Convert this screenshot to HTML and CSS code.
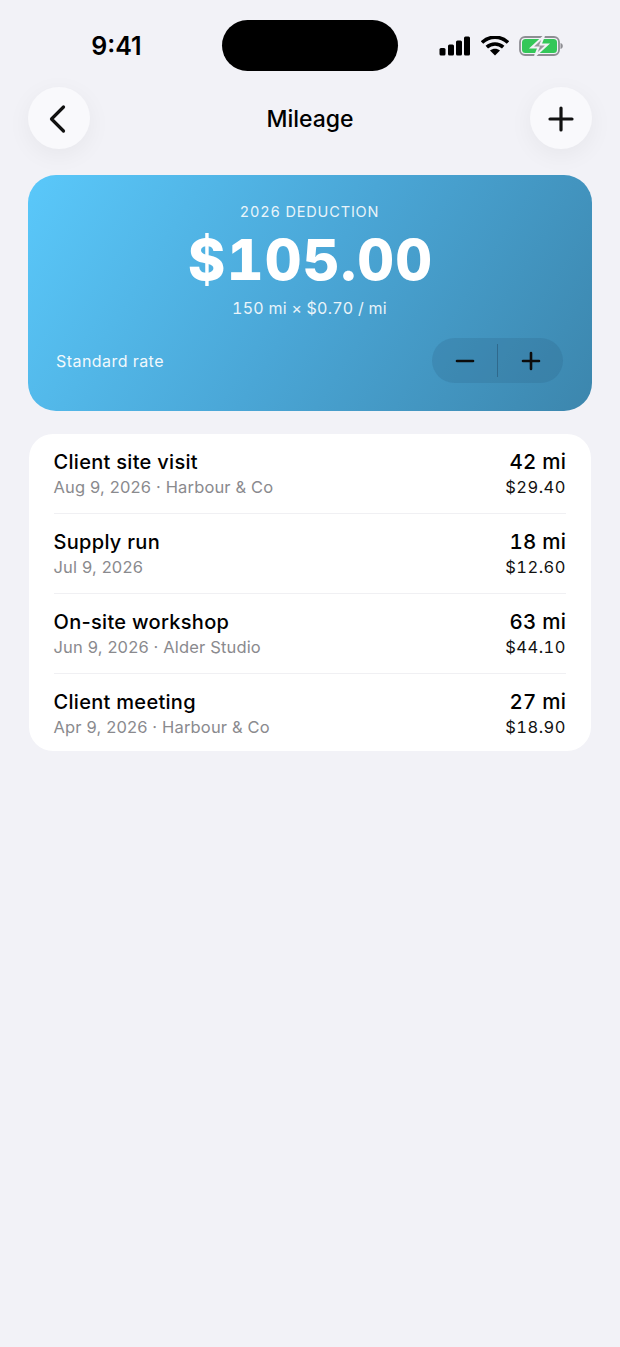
FILE: index.html
```html
<!DOCTYPE html>
<html>
<head>
    <title>Mileage</title>
    <link rel="stylesheet" href="styles.css">
</head>
<body>
    <div class="status-bar">
        <div class="time">9:41</div>
        <div class="island"></div>
        <div class="status-icons">
            <svg width="32" height="20" viewBox="0 0 32 20">
                <rect x="0.5" y="12" width="6" height="7.5" rx="1.5"/>
                <rect x="9" y="8.5" width="6" height="11" rx="1.5"/>
                <rect x="17" y="4.5" width="6" height="15" rx="1.5"/>
                <rect x="25" y="0.5" width="6" height="19" rx="1.5"/>
            </svg>
            <svg width="28" height="20" viewBox="0 0 28 20">
                <path d="M1 6.500C8.500 -0.500 19.500 -0.500 27 6.500" class="wifi-arc"/>
                <path d="M5.800 11.200C10.500 6.900 17.500 6.900 22.200 11.200" class="wifi-arc"/>
                <path d="M14 19.500L9 14.500C12 12 16 12 19 14.500Z"/>
            </svg>
            <svg width="44" height="20" viewBox="0 0 44 20">
                <rect x="1" y="1" width="39" height="18" rx="5" class="batt-shell"/>
                <rect x="3" y="3" width="35" height="14" rx="3.500" class="batt-fill"/>
                <path d="M41.500 7C43 7.300 43.800 8.500 43.800 10C43.800 11.500 43 12.700 41.500 13Z" class="batt-tip"/>
                <path d="M25 0L12.500 11.500H19.500L16 20L28.500 8.500H21.500Z" class="batt-bolt"/>
            </svg>
        </div>
    </div>

    <div class="nav">
        <div class="round-btn">
            <svg width="24" height="32" viewBox="0 0 24 32"><path d="M16.500 4L4.500 16L16.500 28"/></svg>
        </div>
        <div class="nav-title">Mileage</div>
        <div class="round-btn">
            <svg width="28" height="28" viewBox="0 0 28 28"><path d="M14 3V25M3 14H25"/></svg>
        </div>
    </div>

    <div class="hero">
        <div class="hero-label">2026 DEDUCTION</div>
        <div class="hero-amount">$105.00</div>
        <div class="hero-calc">150 mi × $0.70 / mi</div>
        <div class="hero-foot">
            <div class="hero-rate">Standard rate</div>
            <div class="stepper">
                <div class="step">
                    <svg width="20" height="20" viewBox="0 0 20 20"><path d="M2 10H18"/></svg>
                </div>
                <div class="step-line"></div>
                <div class="step">
                    <svg width="20" height="20" viewBox="0 0 20 20"><path d="M2 10H18M10 2V18"/></svg>
                </div>
            </div>
        </div>
    </div>

    <div class="trips">
        <div class="trip">
            <div>
                <div class="trip-name">Client site visit</div>
                <div class="trip-sub">Aug 9, 2026 · Harbour &amp; Co</div>
            </div>
            <div class="trip-right">
                <div class="trip-miles">42 mi</div>
                <div class="trip-money">$29.40</div>
            </div>
        </div>
        <div class="trip">
            <div>
                <div class="trip-name">Supply run</div>
                <div class="trip-sub">Jul 9, 2026</div>
            </div>
            <div class="trip-right">
                <div class="trip-miles">18 mi</div>
                <div class="trip-money">$12.60</div>
            </div>
        </div>
        <div class="trip">
            <div>
                <div class="trip-name">On-site workshop</div>
                <div class="trip-sub">Jun 9, 2026 · Alder Studio</div>
            </div>
            <div class="trip-right">
                <div class="trip-miles">63 mi</div>
                <div class="trip-money">$44.10</div>
            </div>
        </div>
        <div class="trip">
            <div>
                <div class="trip-name">Client meeting</div>
                <div class="trip-sub">Apr 9, 2026 · Harbour &amp; Co</div>
            </div>
            <div class="trip-right">
                <div class="trip-miles">27 mi</div>
                <div class="trip-money">$18.90</div>
            </div>
        </div>
    </div>
</body>
</html>
```

FILE: styles.css
```css
html, body {
    height: 100%;
}
body {
    margin: 0;
    background-color: #f2f2f7;
    color: #000;
    font-family: Inter, "Noto Sans", sans-serif;
    font-variant-numeric: tabular-nums;
    overflow: hidden;
}
.status-bar {
    display: flex;
    align-items: center;
    height: 51px;
    padding: 20px 57px 0 0;
}
.time {
    width: 222px;
    padding-left: 11px;
    box-sizing: border-box;
    text-align: center;
    font-size: 25px;
    font-weight: 600;
    font-variant-numeric: normal;
}
.island {
    width: 176px;
    height: 51px;
    border-radius: 26px;
    background-color: #000;
}
.status-icons {
    display: flex;
    align-items: center;
    gap: 10px;
    margin-left: auto;
}
.status-icons svg {
    display: block;
}
.wifi-arc {
    fill: none;
    stroke: #000;
    stroke-width: 3.6;
}
.batt-shell {
    fill: none;
    stroke: #8e8e93;
    stroke-width: 1.8;
}
.batt-fill {
    fill: #34c759;
}
.batt-tip {
    fill: #8e8e93;
}
.batt-bolt {
    fill: #98989d;
    stroke: #f2f2f7;
    stroke-width: 2;
}
.nav {
    display: flex;
    align-items: center;
    justify-content: space-between;
    margin: 16px 28px 0;
}
.round-btn {
    display: flex;
    align-items: center;
    justify-content: center;
    width: 62px;
    height: 62px;
    border-radius: 50%;
    background-color: #f9f9fc;
    box-shadow: 0 6px 24px rgba(0, 0, 0, 0.05);
}
.round-btn svg {
    margin-top: 1px;
    fill: none;
    stroke: #111;
    stroke-width: 3.2;
    stroke-linecap: round;
    stroke-linejoin: round;
}
.nav-title {
    padding-top: 2px;
    font-size: 23px;
    font-weight: 500;
}
.hero {
    box-sizing: border-box;
    height: 236px;
    margin: 26px 28px 0;
    padding: 28px 29px 0 28px;
    border-radius: 28px;
    background: linear-gradient(122deg, #5ac8fa 0%, #4aa6d6 50%, #3c86ad 100%);
    color: #fff;
    text-align: center;
}
.hero-label {
    font-size: 14.500px;
    line-height: 18px;
    letter-spacing: 0.85px;
    opacity: 0.88;
}
.hero-amount {
    margin-top: 5px;
    padding-left: 2px;
    font-size: 57px;
    font-weight: 800;
    line-height: 67px;
    letter-spacing: 1.2px;
}
.hero-calc {
    margin-top: 5px;
    font-size: 16px;
    line-height: 20px;
    letter-spacing: 0.25px;
    opacity: 0.88;
}
.hero-foot {
    display: flex;
    align-items: center;
    justify-content: space-between;
    margin-top: 20px;
}
.hero-rate {
    font-size: 16px;
    letter-spacing: 0.45px;
    opacity: 0.92;
}
.stepper {
    display: flex;
    align-items: center;
    width: 131px;
    height: 45px;
    border-radius: 23px;
    background-color: rgba(40, 90, 125, 0.2);
}
.step {
    display: flex;
    flex: 1;
    align-items: center;
    justify-content: center;
}
.step svg {
    fill: none;
    stroke: #0c0c0c;
    stroke-width: 2.6;
    stroke-linecap: round;
}
.step-line {
    width: 1px;
    height: 33px;
    background-color: rgba(30, 70, 100, 0.45);
}
.trips {
    margin: 23px 29px 0;
    padding: 0 25px 0 24.500px;
    border-radius: 24px;
    background-color: #fff;
}
.trip {
    display: flex;
    align-items: center;
    justify-content: space-between;
    box-sizing: border-box;
    height: 80px;
    border-bottom: 1px solid #f0f0f3;
}
.trip:last-child {
    height: 77px;
    padding-top: 2px;
    border-bottom: none;
}
.trip-name {
    font-size: 20px;
    font-weight: 500;
    line-height: 26px;
    letter-spacing: 0.3px;
    font-variant-numeric: normal;
}
.trip-sub {
    margin-top: 1px;
    font-size: 16.500px;
    line-height: 23px;
    letter-spacing: 0.16px;
    color: #8a8a8e;
    font-variant-numeric: normal;
}
.trip-right {
    text-align: right;
}
.trip-miles {
    font-size: 20.500px;
    font-weight: 500;
    line-height: 26px;
    letter-spacing: 0.2px;
}
.trip-money {
    margin-top: 1px;
    font-size: 16.500px;
    line-height: 23px;
    letter-spacing: 0.5px;
    color: #111;
}
```
